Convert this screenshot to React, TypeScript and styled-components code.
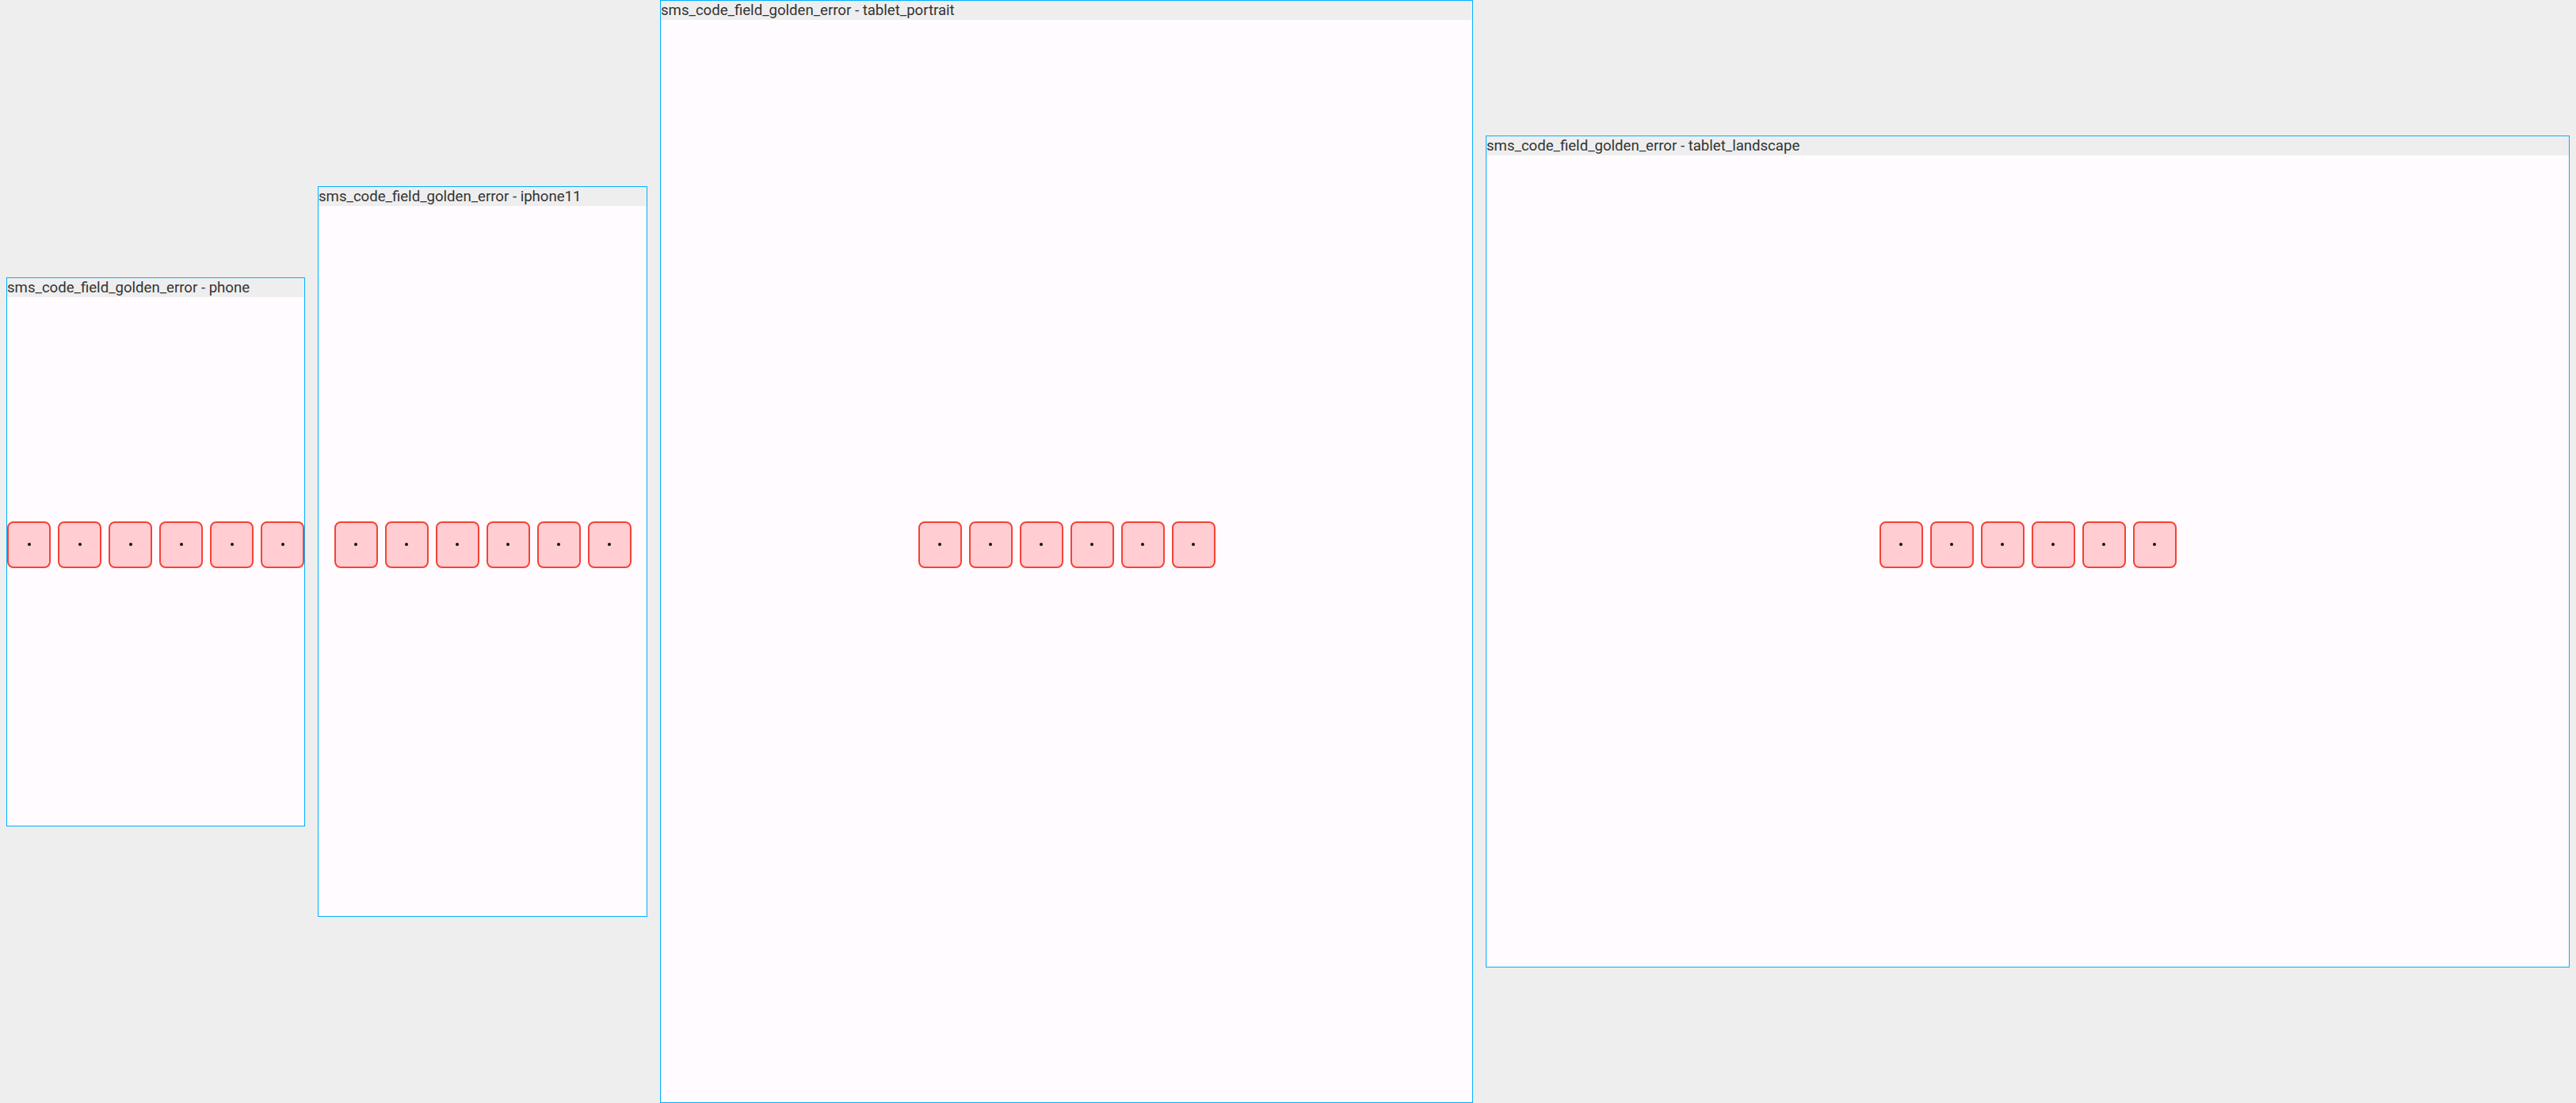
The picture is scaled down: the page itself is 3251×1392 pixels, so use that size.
import React from 'react';
import styled, { createGlobalStyle } from 'styled-components';

const GlobalStyle = createGlobalStyle`
  html, body {
    margin: 0;
    padding: 0;
    background: #eeeeee;
  }
  body {
    font-family: Roboto, "Noto Sans", sans-serif;
  }
`;

const Gallery = styled.div`
  display: flex;
  align-items: center;
  gap: 16px;
  height: 1392px;
  padding: 0 8px;
  box-sizing: border-box;
`;

const DeviceFrame = styled.div`
  display: flex;
  flex-direction: column;
  flex: none;
  border: 1px solid #00b0ff;
  background: #fffbfe;
`;

const Label = styled.div`
  height: 24px;
  line-height: 25px;
  background: #eeeeee;
  color: #333333;
  font-size: 18.6px;
  white-space: nowrap;
  overflow: hidden;
`;

const Screen = styled.div<{ $w: number; $h: number }>`
  width: ${(p) => p.$w}px;
  height: ${(p) => p.$h}px;
  display: flex;
  flex-direction: column;
  align-items: center;
  justify-content: center;
  overflow: hidden;
`;

const CodeField = styled.div`
  display: flex;
  flex-direction: column;
  align-items: center;
  padding-bottom: 42px;
`;

const CellRow = styled.div`
  display: flex;
  gap: 9px;
`;

const Cell = styled.div`
  width: 55px;
  height: 59px;
  box-sizing: border-box;
  border: 2px solid #f44336;
  border-radius: 8px;
  background: #ffcdd2;
  display: flex;
  align-items: center;
  justify-content: center;
`;

const Dot = styled.span`
  width: 4px;
  height: 4px;
  border-radius: 50%;
  background: #111111;
`;

const devices = [
  { name: 'phone', w: 375, h: 667 },
  { name: 'iphone11', w: 414, h: 896 },
  { name: 'tablet_portrait', w: 1024, h: 1366 },
  { name: 'tablet_landscape', w: 1366, h: 1024 },
];

const SmsCodeField = () => (
  <CodeField>
    <CellRow>
      {Array.from({ length: 6 }).map((_, i) => (
        <Cell key={i}>
          <Dot />
        </Cell>
      ))}
    </CellRow>
  </CodeField>
);

export default function App() {
  return (
    <>
      <GlobalStyle />
      <Gallery>
        {devices.map((d) => (
          <DeviceFrame key={d.name}>
            <Label>sms_code_field_golden_error - {d.name}</Label>
            <Screen $w={d.w} $h={d.h}>
              <SmsCodeField />
            </Screen>
          </DeviceFrame>
        ))}
      </Gallery>
    </>
  );
}
